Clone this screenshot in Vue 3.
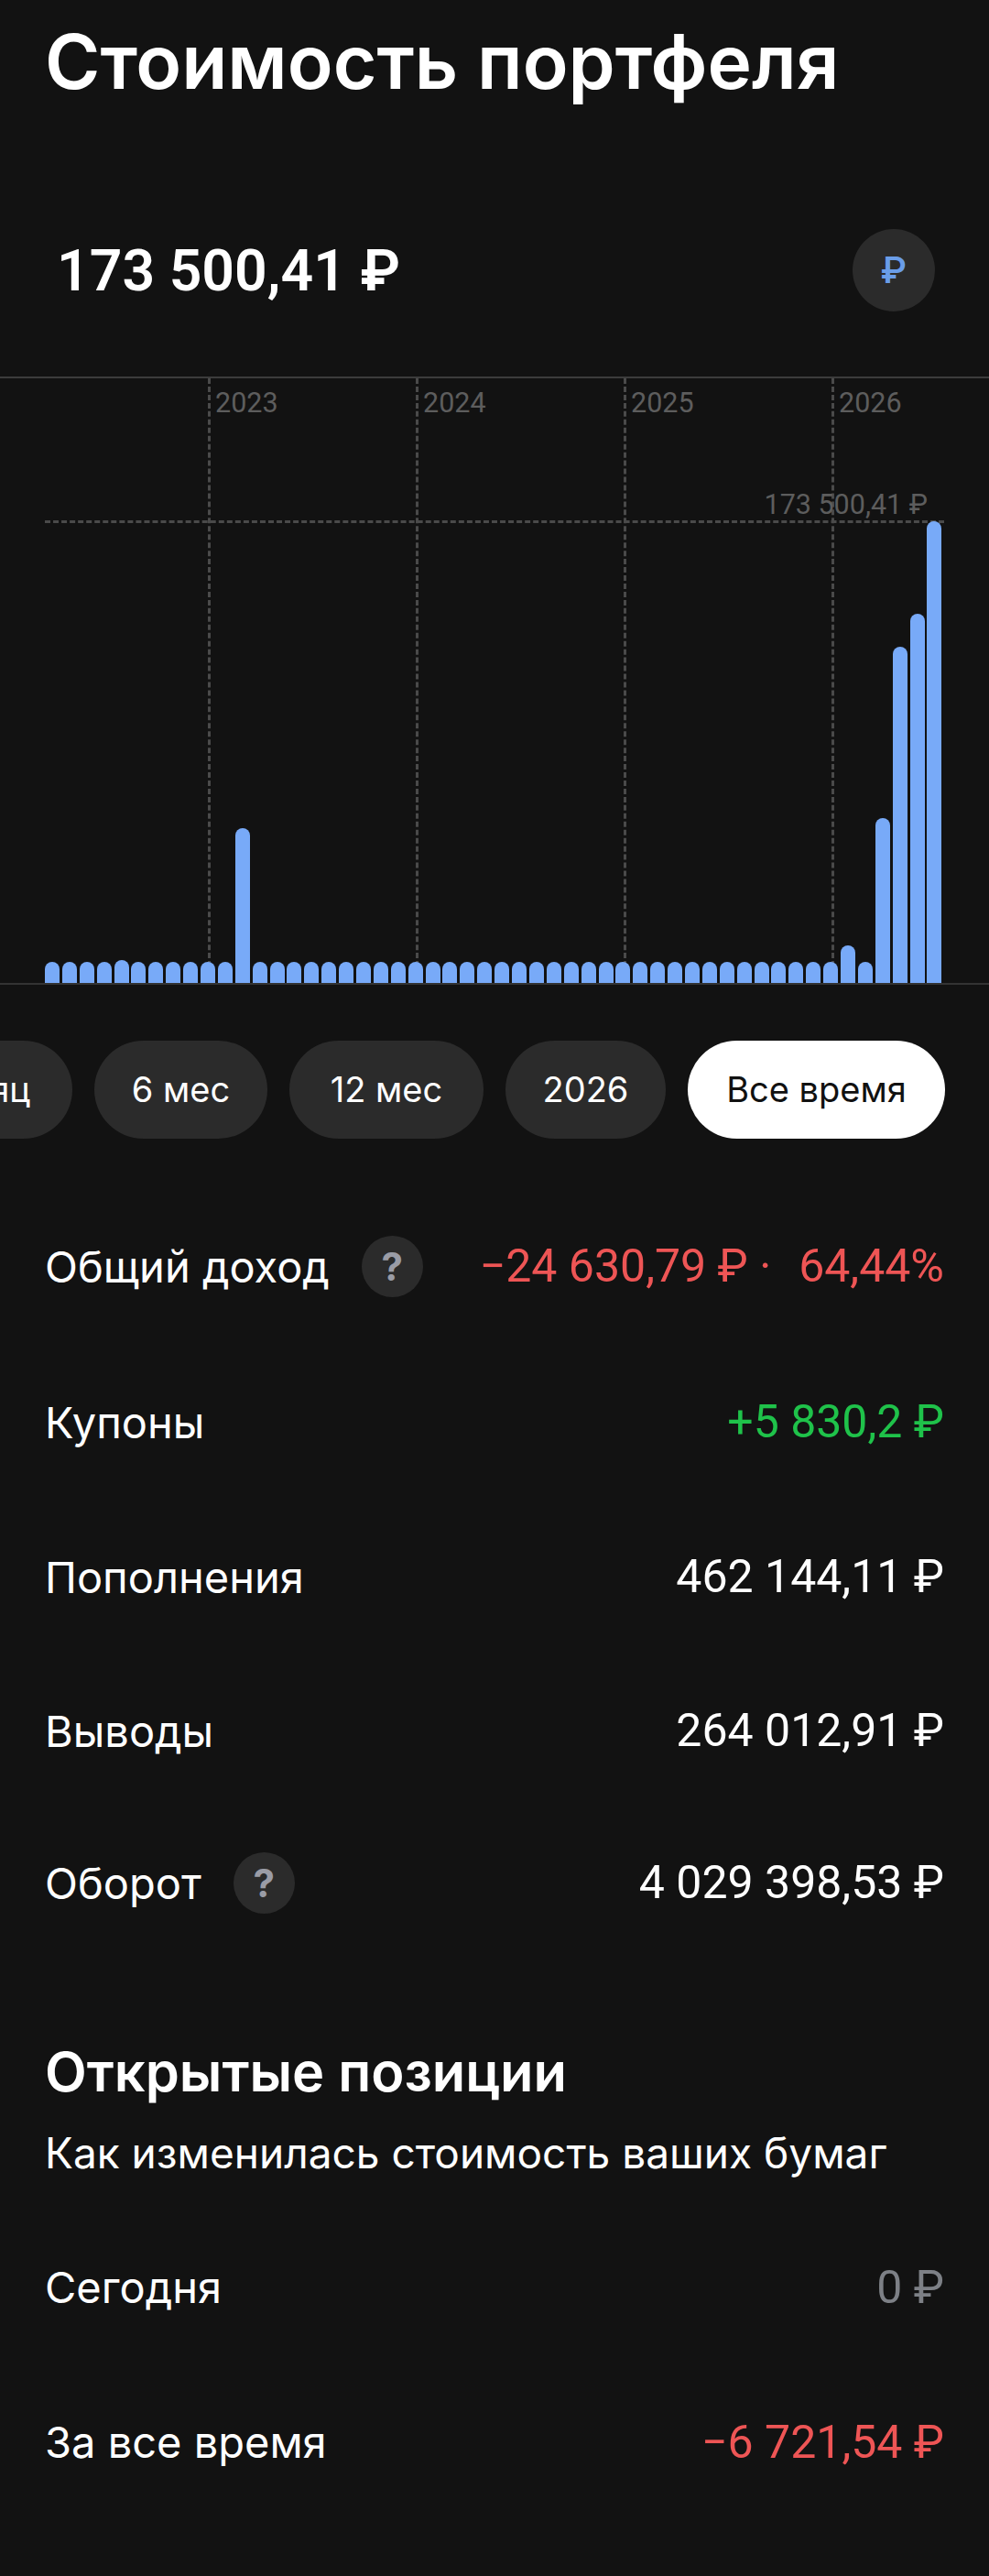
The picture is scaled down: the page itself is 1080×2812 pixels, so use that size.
<template>
  <div class="page">
    <h1 class="title">Стоимость портфеля</h1>

    <div class="total">
      <span class="total-value">173 500,41 ₽</span>
      <div class="currency">₽</div>
    </div>

    <div class="chart">
      <div v-for="y in years" :key="y.label" class="year-line" :style="{ left: y.x + 'px' }">
        <span class="year-label">{{ y.label }}</span>
      </div>
      <div class="max-line"></div>
      <span class="max-label">173 500,41 ₽</span>
      <div class="bars">
        <div v-for="(h, i) in bars" :key="i" class="bar" :style="{ height: h + 'px' }"></div>
      </div>
    </div>

    <div class="pills">
      <div
        v-for="p in periods"
        :key="p.label"
        class="pill"
        :class="{ active: p.label === 'Все время' }"
        :style="{ width: p.w + 'px' }"
      >
        {{ p.label }}
      </div>
    </div>

    <div class="rows">
      <div v-for="r in rows" :key="r.label" class="row" :style="{ height: r.h + 'px' }">
        <div class="row-label">
          {{ r.label }}
          <span v-if="r.help" class="help">?</span>
        </div>
        <div class="row-value" :class="r.cls">{{ r.value }}</div>
      </div>
    </div>

    <h2 class="section-title">Открытые позиции</h2>
    <p class="section-sub">Как изменилась стоимость ваших бумаг</p>

    <div class="rows bottom">
      <div class="row tall">
        <div class="row-label">Сегодня</div>
        <div class="row-value muted">0 ₽</div>
      </div>
      <div class="row tall">
        <div class="row-label">За все время</div>
        <div class="row-value red">−6 721,54 ₽</div>
      </div>
    </div>
  </div>
</template>

<script setup>
const years = [
  { label: '2023', x: 227 },
  { label: '2024', x: 454 },
  { label: '2025', x: 681 },
  { label: '2026', x: 908 },
]

// 52 месяца, почти все столбики минимальной высоты
const bars = Array(52).fill(23)
bars[4] = 25
bars[11] = 169
bars[46] = 41
bars[48] = 180
bars[49] = 367
bars[50] = 403
bars[51] = 504

const periods = [
  { label: 'Месяц', w: 214 },
  { label: '6 мес', w: 189 },
  { label: '12 мес', w: 212 },
  { label: '2026', w: 175 },
  { label: 'Все время', w: 281 },
]

const rows = [
  { label: 'Общий доход', value: '−24 630,79 ₽ · \u00a0\u200a64,44%', cls: 'red', help: true, h: 170 },
  { label: 'Купоны', value: '+5 830,2 ₽', cls: 'green', h: 170 },
  { label: 'Пополнения', value: '462 144,11 ₽', h: 168 },
  { label: 'Выводы', value: '264 012,91 ₽', h: 168 },
  { label: 'Оборот', value: '4 029 398,53 ₽', help: true, h: 164 },
]
</script>

<style>
html,
body {
  margin: 0;
  background: #121212;
}
</style>

<style scoped>
.page {
  width: 1080px;
  height: 2812px;
  overflow: hidden;
  background: #121212;
  color: #fff;
  font-family: "Inter", "Noto Sans", sans-serif;
}

.title {
  margin: 0;
  padding: 20px 49px 0;
  font-size: 82px;
  line-height: 96px;
  font-weight: 600;
  white-space: nowrap;
}

.total {
  display: flex;
  align-items: center;
  justify-content: space-between;
  margin-top: 134px;
  padding: 0 59px 0 62px;
  height: 90px;
}

.total-value {
  font-family: "Roboto", sans-serif;
  font-size: 62.5px;
  font-weight: 600;
}

.currency {
  width: 90px;
  height: 90px;
  border-radius: 50%;
  background: #2b2b2b;
  color: #6a9de8;
  font-family: "Roboto", sans-serif;
  font-size: 40px;
  font-weight: 500;
  display: flex;
  align-items: center;
  justify-content: center;
}

.chart {
  position: relative;
  height: 660px;
  margin-top: 71px;
  border-top: 2px solid #3c3c3c;
  border-bottom: 2px solid #333;
}

.year-line {
  position: absolute;
  top: 0;
  bottom: 0;
  border-left: 3px dashed #4a4a4a;
}

.year-label {
  position: absolute;
  left: 5px;
  top: 8px;
  font-family: "Roboto", sans-serif;
  font-size: 30.5px;
  line-height: 38px;
  color: #5d5d5d;
}

.max-line {
  position: absolute;
  left: 49px;
  right: 49px;
  top: 155px;
  border-top: 3px dashed #4a4a4a;
}

.max-label {
  position: absolute;
  right: 67px;
  top: 119px;
  font-family: "Roboto", sans-serif;
  font-size: 30.5px;
  line-height: 38px;
  color: #5d5d5d;
}

.bars {
  position: absolute;
  left: 49px;
  bottom: 0;
  display: flex;
  align-items: flex-end;
  gap: 2.9px;
}

.bar {
  width: 16px;
  border-radius: 8px 8px 0 0;
  background: #78aaf8;
}

.pills {
  display: flex;
  justify-content: flex-end;
  gap: 24px;
  padding-right: 48px;
  margin-top: 61px;
}

.pill {
  flex: none;
  height: 107px;
  border-radius: 54px;
  background: #2b2b2b;
  font-size: 38px;
  line-height: 107px;
  text-align: center;
  white-space: nowrap;
}

.pill.active {
  background: #fff;
  color: #111;
}

.rows {
  padding: 0 49px;
  margin-top: 54px;
}

.row {
  display: flex;
  align-items: center;
  justify-content: space-between;
  height: 170px;
  font-size: 47px;
}

.row-label {
  display: flex;
  align-items: center;
  gap: 35px;
}

.row-value {
  font-family: "Roboto", sans-serif;
  font-size: 50px;
}

.help {
  width: 67px;
  height: 67px;
  border-radius: 50%;
  background: #2b2b2b;
  color: #9a9ca6;
  font-size: 42px;
  font-weight: 700;
  display: flex;
  align-items: center;
  justify-content: center;
}

.red {
  color: #ee5555;
}

.green {
  color: #1fc24a;
}

.muted {
  color: #7d8086;
}

.section-title {
  margin: 89px 0 0;
  padding: 0 49px;
  font-size: 59.5px;
  line-height: 70px;
  font-weight: 600;
}

.section-sub {
  margin: 26px 0 0;
  padding: 0 49px;
  font-size: 46px;
  line-height: 56px;
}

.rows.bottom {
  margin-top: 34px;
}

.row.tall {
  height: 169px;
}
</style>
